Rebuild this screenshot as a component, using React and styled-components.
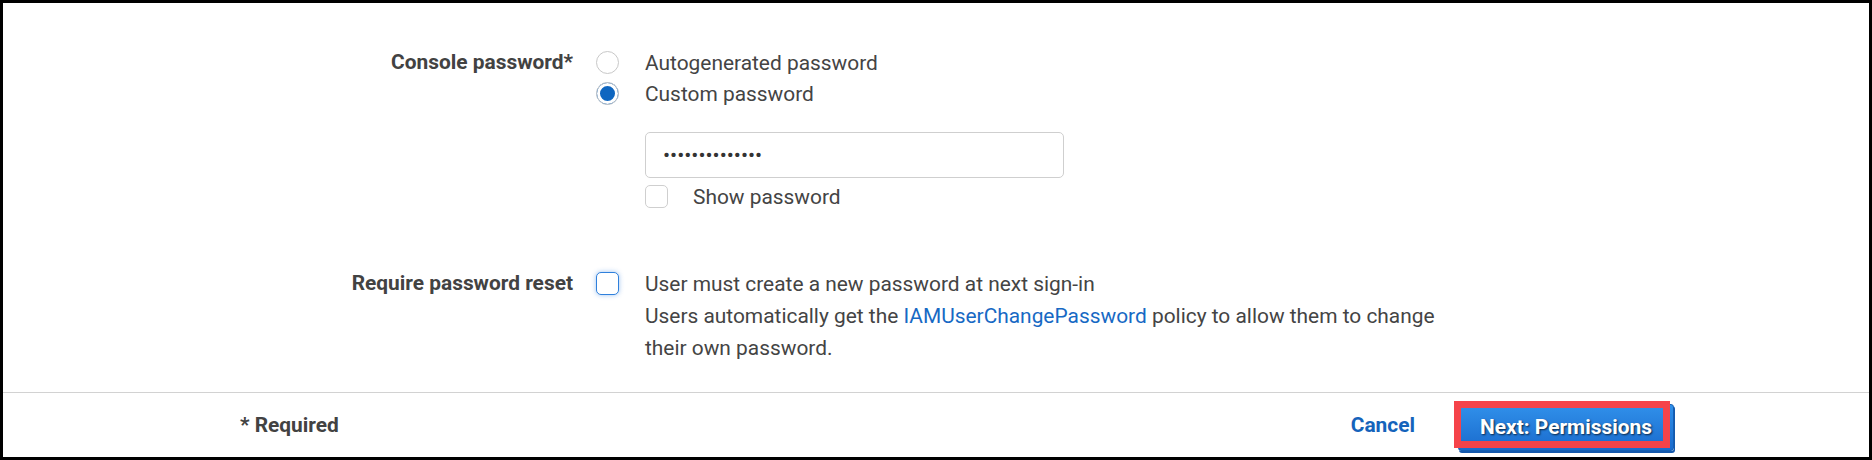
import React from 'react';
import styled, { createGlobalStyle } from 'styled-components';

const GlobalStyle = createGlobalStyle`
  body {
    margin: 0;
    font-family: Roboto, "Liberation Sans", sans-serif;
    color: #444;
    background: #fff;
  }
`;

const App = () => {
  return (
    <>
      <GlobalStyle />
      <Frame>
        <FormBody>
          <Field>
            <Label>Console password*</Label>
            <div>
              <Option>
                <Radio />
                Autogenerated password
              </Option>
              <Option>
                <Radio checked />
                Custom password
              </Option>
              <Nested>
                <PasswordInput type="password" value="abcdefghijklmn" readOnly />
                <ShowRow>
                  <Checkbox />
                  Show password
                </ShowRow>
              </Nested>
            </div>
          </Field>

          <Field spaced>
            <Label>Require password reset</Label>
            <ResetRow>
              <Checkbox focused />
              <Help>
                User must create a new password at next sign-in
                <br />
                Users automatically get the <Link href="#">IAMUserChangePassword</Link> policy to
                allow them to change
                <br />
                their own password.
              </Help>
            </ResetRow>
          </Field>
        </FormBody>

        <Footer>
          <Required>* Required</Required>
          <Actions>
            <CancelLink href="#">Cancel</CancelLink>
            <PrimaryButton>Next: Permissions</PrimaryButton>
          </Actions>
        </Footer>
      </Frame>
    </>
  );
};

export default App;

//styles

const Frame = styled.div`
  height: 460px;
  box-sizing: border-box;
  border: 3px solid #000;
  display: flex;
  flex-direction: column;
  overflow: hidden;
`;

const FormBody = styled.div`
  flex: 1;
  padding-top: 44px;
`;

const Field = styled.div`
  display: grid;
  grid-template-columns: 570px 1fr;
  column-gap: 23px;
  margin-top: ${({ spaced }) => (spaced ? '60px' : '0')};
  font-size: 20.9px;
`;

const Label = styled.div`
  text-align: right;
  font-weight: 700;
  line-height: 31px;
  color: #424242;
`;

const Option = styled.label`
  display: flex;
  align-items: center;
  gap: 26px;
  height: 31px;
`;

const Radio = styled.span`
  width: 23px;
  height: 23px;
  box-sizing: border-box;
  border-radius: 50%;
  border: 1px solid #c8c8c8;
  background: ${({ checked }) => (checked ? '#0f66c0' : '#fff')};
  box-shadow: ${({ checked }) => (checked ? 'inset 0 0 0 3px #fff' : 'none')};
`;

const Nested = styled.div`
  margin-left: 49px;
  padding-top: 23px;
`;

const PasswordInput = styled.input`
  display: block;
  width: 419px;
  height: 46px;
  box-sizing: border-box;
  border: 1px solid #cfcfcf;
  border-radius: 5px;
  padding: 0 17px;
  font-family: Roboto, sans-serif;
  font-size: 21px;
  color: #333;
  outline: none;
`;

const ShowRow = styled.label`
  display: flex;
  align-items: center;
  gap: 25px;
  margin-top: 7px;
  height: 23px;
`;

const Checkbox = styled.span`
  flex: none;
  width: 23px;
  height: 23px;
  box-sizing: border-box;
  border-radius: 5px;
  border: ${({ focused }) => (focused ? '1.5px solid #2f80dc' : '1px solid #cfcfcf')};
  box-shadow: ${({ focused }) => (focused ? '0 0 5px rgba(40, 120, 220, 0.45)' : 'none')};
  background: #fff;
`;

const ResetRow = styled.div`
  display: flex;
  align-items: flex-start;
  gap: 26px;
  & > span {
    margin-top: 4px;
  }
`;

const Help = styled.div`
  line-height: 32px;
`;

const Link = styled.a`
  color: #1769c4;
  text-decoration: none;
`;

const Footer = styled.div`
  height: 65px;
  box-sizing: border-box;
  border-top: 1px solid #d2d2d2;
  display: flex;
  align-items: center;
  justify-content: space-between;
  padding: 0 195px 0 237px;
  font-size: 20.9px;
`;

const Required = styled.span`
  font-weight: 700;
  color: #424242;
`;

const Actions = styled.div`
  display: flex;
  align-items: center;
  gap: 43px;
`;

const CancelLink = styled.a`
  color: #1563bb;
  font-weight: 700;
  text-decoration: none;
`;

const PrimaryButton = styled.button`
  position: relative;
  width: 216px;
  height: 47px;
  margin-top: 4px;
  padding: 0;
  border: 1px solid #145fb4;
  border-radius: 3px;
  background: linear-gradient(#3090ea, #1a6bcd);
  box-shadow: 1px 2px 0 #1559ad;
  color: #fff;
  font-family: Roboto, sans-serif;
  font-size: 20.9px;
  font-weight: 700;
  text-shadow: 1px 1px 2px rgba(0, 0, 0, 0.7);

  &::after {
    content: '';
    position: absolute;
    left: -5px;
    top: -4px;
    width: 216px;
    height: 47px;
    box-sizing: border-box;
    border: 7px solid #f5434a;
  }
`;
